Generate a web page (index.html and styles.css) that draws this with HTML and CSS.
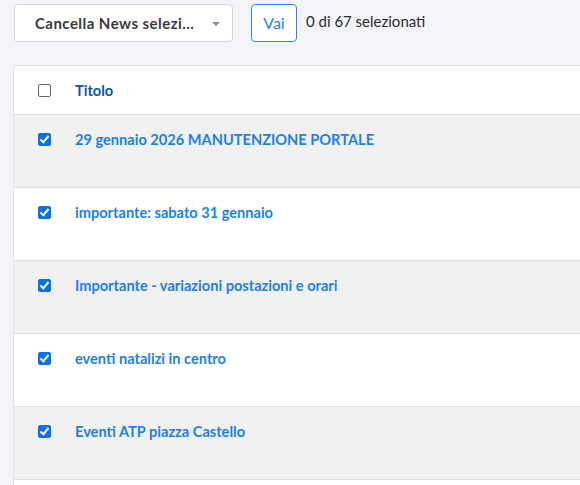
FILE: index.html
```html
<!DOCTYPE html>
<html lang="it">
<head>
<meta charset="utf-8">
<link rel="stylesheet" href="styles.css">
</head>
<body>
<div class="actions">
  <div class="select"><span class="select-text">Cancella News selezi...</span><span class="caret"></span></div>
  <button class="btn">Vai</button>
  <span class="counter">0 di 67 selezionati</span>
</div>
<div class="card">
  <div class="row head">
    <span class="cb"></span>
    <span class="title head-title">Titolo</span>
  </div>
  <div class="row odd"><span class="cb checked"></span><a class="title">29 gennaio 2026 MANUTENZIONE PORTALE</a></div>
  <div class="row"><span class="cb checked"></span><a class="title">importante: sabato 31 gennaio</a></div>
  <div class="row odd"><span class="cb checked"></span><a class="title">Importante - variazioni postazioni e orari</a></div>
  <div class="row"><span class="cb checked"></span><a class="title">eventi natalizi in centro</a></div>
  <div class="row odd"><span class="cb checked"></span><a class="title">Eventi ATP piazza Castello</a></div>
  <div class="row"></div>
</div>
</body>
</html>
```
FILE: styles.css
```css
html, body { margin: 0; padding: 0; }
body {
  background: #f3f4f8;
  font-family: "Source Sans Pro", "Lato", "Noto Sans", sans-serif;
  font-size: 14px;
  color: #212529;
  overflow: hidden;
  height: 485px;
}
.actions {
  display: flex;
  align-items: center;
  padding: 4px 0 0 14px;
  height: 37px;
}
.select {
  box-sizing: border-box;
  width: 219px;
  height: 38px;
  background: #fff;
  border: 1px solid #d4d6da;
  border-radius: 4px;
  display: flex;
  align-items: center;
  padding: 0 0 0 20px;
  position: relative;
}
.select-text {
  font-weight: 700;
  color: #3a3a3a;
  font-size: 15px;
  letter-spacing: 0.45px;
}
.caret {
  position: absolute;
  right: 12px;
  top: 17px;
  width: 0; height: 0;
  border-left: 4px solid transparent;
  border-right: 4px solid transparent;
  border-top: 4px solid #8c8c8c;
}
.btn {
  box-sizing: border-box;
  margin-left: 18px;
  width: 46px;
  height: 38px;
  background: #fff;
  border: 1px solid #2d7ff9;
  border-radius: 4px;
  color: #2d7ff9;
  font-family: inherit;
  font-size: 16px;
  padding: 0;
}
.counter {
  margin-left: 9px;
  font-size: 15px;
  color: #2b2b2b;
  position: relative;
  top: -2px;
}
.card {
  margin: 24px 0 0 13px;
  background: #fff;
  border: 1px solid #e2e3e7;
  border-right: none;
  border-radius: 4px 0 0 0;
}
.row {
  box-sizing: border-box;
  height: 73px;
  border-top: 1px solid #dedfe3;
  display: flex;
  align-items: flex-start;
  padding: 17px 0 0 24px;
}
.row.head {
  height: 48px;
  border-top: none;
  padding-top: 17px;
}
.row.odd { background: #f1f1f1; }
.cb {
  box-sizing: border-box;
  width: 13px;
  height: 13px;
  border: 1px solid #6b6b6b;
  border-radius: 2px;
  background: #fff;
  margin-top: 1px;
  position: relative;
}
.cb.checked {
  background: #0b70ec;
  border-color: #0b70ec;
}
.cb.checked::after {
  content: "";
  position: absolute;
  left: 3px;
  top: 0px;
  width: 3px;
  height: 7px;
  border-right: 2px solid #fff;
  border-bottom: 2px solid #fff;
  transform: rotate(40deg);
}
.title {
  margin-left: 24px;
  font-weight: 700;
  color: #1a7ff2;
  font-size: 14.6px;
  line-height: 16px;
}
.head-title { color: #0a55b7; }
```
